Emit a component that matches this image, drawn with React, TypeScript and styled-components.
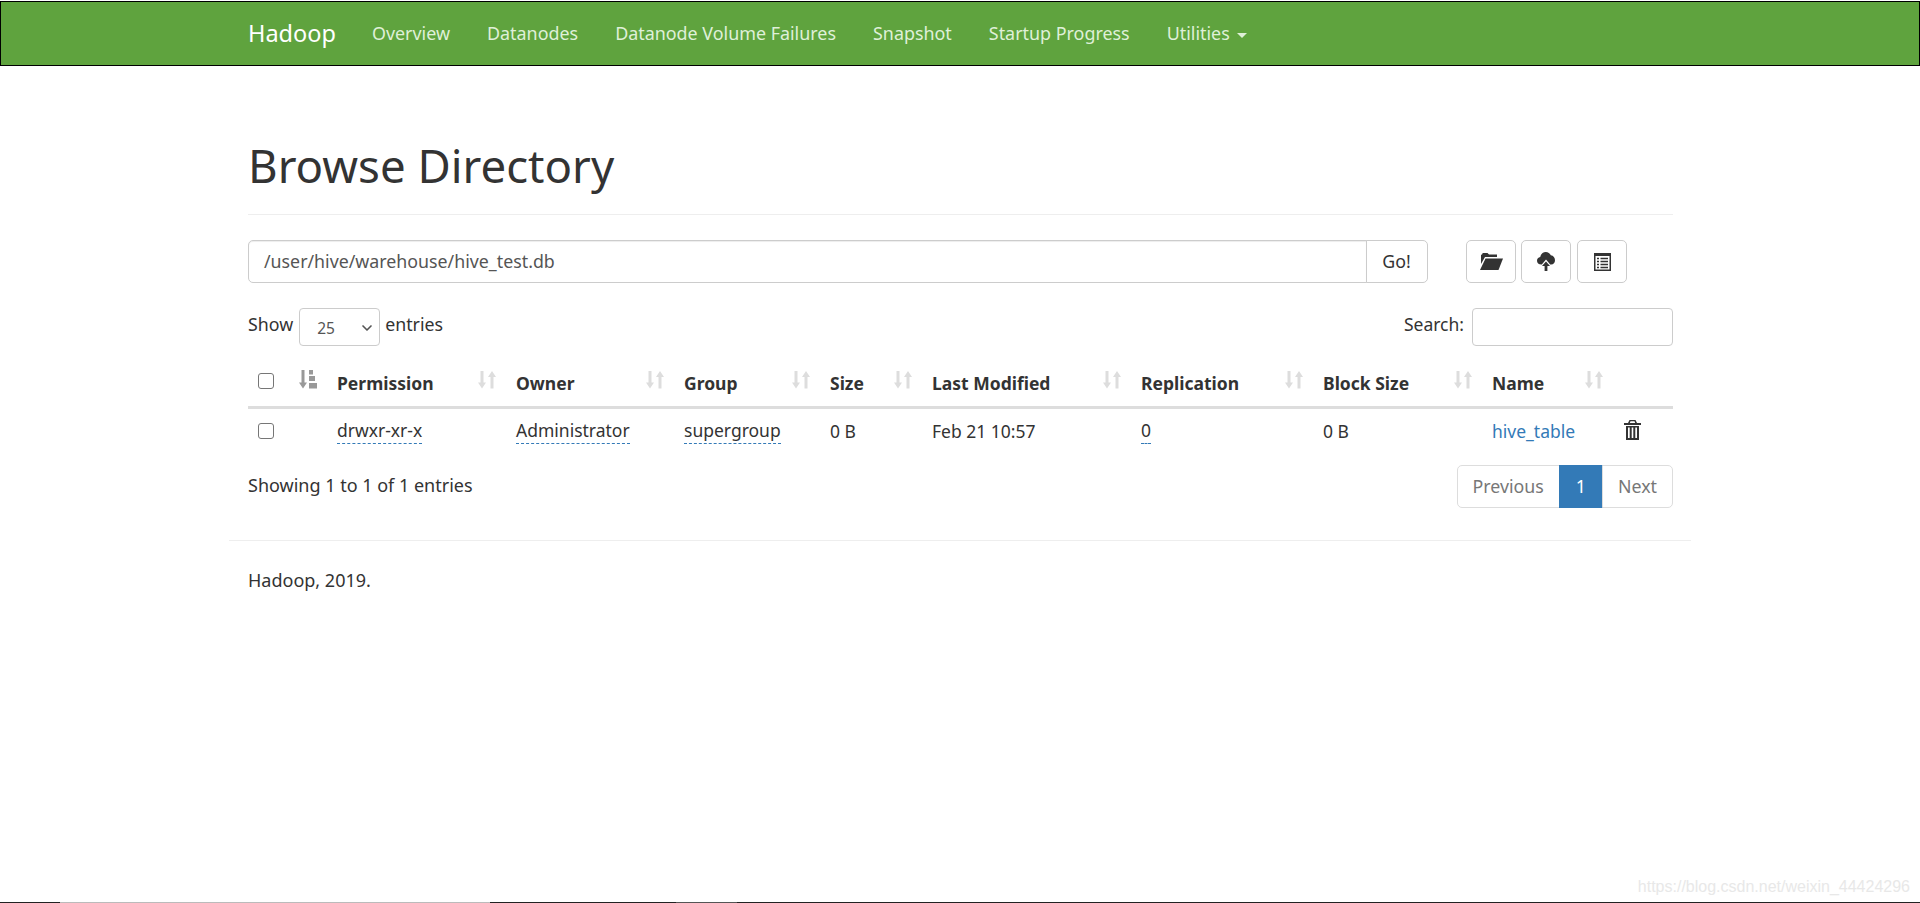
import React from "react";
import styled, { createGlobalStyle } from "styled-components";
import { ChevronDown } from "lucide-react";

const Global = createGlobalStyle`
  html, body { margin: 0; padding: 0; background: #fff; }
  body { font-family: "Noto Sans", "Liberation Sans", sans-serif; font-size: 17.8px; line-height: 25px; color: #333; height: 903px; overflow: hidden; position: relative; }
  * { box-sizing: border-box; }
`;

const Navbar = styled.nav`
  height: 65px; margin-top: 1px; background: #5fa33e; border: 1px solid #000;
  display: flex; justify-content: center;
`;
const NavInner = styled.div`
  width: 1462px; padding: 0 19px; display: flex; align-items: center; color: #dff0d8; font-size: 17.9px;
`;
const Brand = styled.a`
  font-size: 23.5px; color: #fff; margin-right: 36px;
`;
const NavLink = styled.a`
  color: #dff0d8; margin-right: 37px; display: flex; align-items: center;
`;
const Caret = styled.span`
  display: inline-block; width: 0; height: 0; margin-left: 7px; margin-top: 3px;
  border-top: 5px solid #dff0d8; border-left: 5px solid transparent; border-right: 5px solid transparent;
`;
const Container = styled.main`
  width: 1462px; margin: 0 auto; padding: 0 18px 0 19px;
`;
const PageHeader = styled.div`
  margin-top: 53px; height: 96px; border-bottom: 1px solid #eee; padding-top: 21px;
`;
const Title = styled.h1`
  margin: 0; font-size: 45.6px; font-weight: 400; line-height: 50px; color: #333;
`;
const Toolbar = styled.div`
  display: flex; margin-top: 25px; height: 43px;
`;
const PathGroup = styled.div`
  width: 1179.5px; display: flex;
`;
const PathInput = styled.div`
  flex: 1; border: 1px solid #ccc; border-radius: 5px 0 0 5px; padding: 0 15px;
  line-height: 41px; color: #555; box-shadow: inset 0 1px 1px rgba(0,0,0,.075);
`;
const GoButton = styled.div`
  width: 62px; margin-left: -1px; border: 1px solid #ccc; border-radius: 0 5px 5px 0;
  text-align: center; line-height: 41px; color: #333;
`;
const IconGroup = styled.div`
  display: flex; margin-left: 38.5px; gap: 5px;
`;
const IconButton = styled.div`
  width: 50px; height: 43px; border: 1px solid #ccc; border-radius: 5px;
  display: flex; align-items: center; justify-content: center; color: #333;
  &:last-child { margin-left: 1px; }
`;
const Controls = styled.div`
  display: flex; justify-content: space-between; margin-top: 25px; height: 38px; align-items: flex-start;
`;
const Label = styled.label`
  display: flex; align-items: center; gap: 6px; height: 38px; padding-bottom: 6px;
`;
const SearchLabel = styled(Label)`
  gap: 5px; font-size: 17.5px;
`;
const SelectBox = styled.div`
  width: 81px; height: 38px; margin: 6px -1px 0 0; border: 1px solid #ccc; border-radius: 4px; color: #555;
  font-size: 15.5px; display: flex; align-items: center; justify-content: space-between; padding: 2px 4px 0 17px;
`;
const SearchBox = styled.div`
  width: 201px; height: 38px; margin-left: 3px; margin-top: 6px; border: 1px solid #ccc; border-radius: 4px;
`;
const Table = styled.table`
  width: 1425px; margin-top: 7px; border-collapse: collapse; table-layout: fixed; font-size: 17.5px;
`;
const Col = styled.col<{ $w: number }>`
  width: ${(p) => p.$w}px;
`;
const Th = styled.th`
  position: relative; height: 54px; padding: 9px 12.5px 0; text-align: left; font-weight: 700;
  border-bottom: 3px solid #ddd; color: #333; white-space: nowrap;
`;
const SortMark = styled.span<{ $dark?: boolean }>`
  position: absolute; right: 8px; top: 17px; line-height: 0; color: ${(p) => (p.$dark ? "#999" : "#ddd")};
`;
const Td = styled.td`
  height: 47px; padding: 0 12.5px; white-space: nowrap; vertical-align: middle; color: #333;
`;
const Abbr = styled.span`
  border-bottom: 1px dashed #337ab7; padding-bottom: 1px; display: inline-block; line-height: 24px;
`;
const Check = styled.span<{ $head?: boolean }>`
  display: block; width: 16px; height: 16px; margin-left: -2.5px; margin-top: ${(p) => (p.$head ? "-6px" : "0")};
  border: 1px solid #767676; border-radius: 3px; background: #fff;
`;
const NameLink = styled.a`
  color: #337ab7;
`;
const TrashWrap = styled.span`
  display: block; line-height: 0; margin-top: -3px;
`;
const InfoRow = styled.div`
  display: flex; justify-content: space-between; align-items: flex-start; height: 78px;
`;
const Info = styled.div`
  padding-top: 19px; font-size: 18px;
`;
const Pager = styled.div`
  display: flex; height: 43px; margin-top: 11px;
`;
const PageItem = styled.div<{ $active?: boolean }>`
  border: 1px solid ${(p) => (p.$active ? "#337ab7" : "#ddd")};
  background: ${(p) => (p.$active ? "#337ab7" : "#fff")};
  color: ${(p) => (p.$active ? "#fff" : "#777")};
  line-height: 41px; padding: 0 ${(p) => (p.$active ? "16px" : "15px")}; margin-left: -1px;
  &:first-child { border-radius: 5px 0 0 5px; margin-left: 0; }
  &:last-child { border-radius: 0 5px 5px 0; }
`;
const FooterRule = styled.hr`
  width: 1462px; margin: 0 auto; border: 0; border-top: 1px solid #eee; margin-top: 8px;
`;
const Footer = styled.footer`
  width: 1462px; margin: 0 auto; padding: 27px 19px 0; font-size: 18px;
`;
const Watermark = styled.div`
  position: absolute; right: 10px; bottom: 7px; font-family: "Liberation Sans", sans-serif; font-size: 16px; line-height: 18px; color: #e8e8e8;
`;
const BottomEdge = styled.div`
  position: absolute; left: 0; right: 0; bottom: 0; height: 1px;
  background: linear-gradient(to right, #222 60px, #bbb 60px, #bbb 490px, #222 490px, #222 676px, #555 676px, #555 737px, #222 737px);
`;

const SortIcon = ({ dark }: { dark?: boolean }) => (
  <svg width="18" height="19" viewBox="0 0 18 19" fill="currentColor">
    {dark ? (
      <>
        <path d="M2.500 0h3v12.500H8L4 18.500 0 12.500h2.500z" />
        <path d="M10 0h4v4.500h-4zM10 6h6v5h-6zM10 13h8v5.500h-8z" />
      </>
    ) : (
      <>
        <path d="M2.500 1h3v11.500H8L4 18.500 0 12.500h2.500z" />
        <path d="M12.500 18.500h3V7H18L14 1l-4 6h2.500z" />
      </>
    )}
  </svg>
);

const FolderIcon = () => (
  <svg width="23" height="17" viewBox="0 0 23 17" fill="currentColor">
    <path d="M1 4V2l1.500-1V0h5l1.500 1.500h8V4H5L1 11z" />
    <path d="M5.500 5.500H23L18.500 17H0z" />
  </svg>
);
const UploadIcon = () => (
  <svg width="18" height="19" viewBox="0 0 18 19" fill="currentColor">
    <path d="M4.500 12.500C1.500 12.500 0 10.800 0 8.700c0-2 1.300-3.500 3.200-3.700C4 2 6 0 8.800 0c2.300 0 4.200 1.300 5 3.300C16.500 3.500 18 5.800 18 8.300c0 2.400-1.500 4.200-3.800 4.200h-1L9 7.500l-4.200 5z" />
    <path d="M9 9.500l4 4.500h-2.600v5H7.600v-5H5z" />
  </svg>
);
const ListIcon = () => (
  <svg width="17" height="18" viewBox="0 0 17 18" fill="none">
    <path fillRule="evenodd" fill="currentColor" d="M0 0h17v18H0zM1.500 3v13.500h14V3z" />
    <path stroke="currentColor" strokeWidth="1.500" d="M3 5.500h2M6.500 5.500H14M3 8.500h2M6.500 8.500H14M3 11.500h2M6.500 11.500H14M3 14.500h2M6.500 14.500H14" />
  </svg>
);
const TrashIcon = () => (
  <svg width="17" height="20" viewBox="0 0 17 20" fill="currentColor">
    <path fillRule="evenodd" d="M5.500 0h6L13 3h4v2H0V3h4zM6.500 1.300 5.800 3h5.400l-.7-1.700z" />
    <path fillRule="evenodd" d="M2 6h13v14H2zM4 7.500V18h1.700V7.500zM7.700 7.500V18h1.600V7.500zM11.300 7.500V18H13V7.500z" />
  </svg>
);

const columns = [
  { w: 76.5, label: "", check: true },
  { w: 179, label: "Permission" },
  { w: 168, label: "Owner" },
  { w: 146, label: "Group" },
  { w: 102, label: "Size" },
  { w: 209, label: "Last Modified" },
  { w: 182, label: "Replication" },
  { w: 169, label: "Block Size" },
  { w: 131.5, label: "Name" },
  { w: 62, label: "" },
];

export default function App() {
  return (
    <>
      <Global />
      <Navbar>
        <NavInner>
          <Brand>Hadoop</Brand>
          <NavLink>Overview</NavLink>
          <NavLink>Datanodes</NavLink>
          <NavLink>Datanode Volume Failures</NavLink>
          <NavLink>Snapshot</NavLink>
          <NavLink>Startup Progress</NavLink>
          <NavLink>
            Utilities
            <Caret />
          </NavLink>
        </NavInner>
      </Navbar>
      <Container>
        <PageHeader>
          <Title>Browse Directory</Title>
        </PageHeader>
        <Toolbar>
          <PathGroup>
            <PathInput>/user/hive/warehouse/hive_test.db</PathInput>
            <GoButton>Go!</GoButton>
          </PathGroup>
          <IconGroup>
            <IconButton><FolderIcon /></IconButton>
            <IconButton><UploadIcon /></IconButton>
            <IconButton><ListIcon /></IconButton>
          </IconGroup>
        </Toolbar>
        <Controls>
          <Label>
            Show
            <SelectBox>
              25
              <ChevronDown size={16} strokeWidth={2.5} />
            </SelectBox>
            entries
          </Label>
          <SearchLabel>
            Search:
            <SearchBox />
          </SearchLabel>
        </Controls>
        <Table>
          <colgroup>
            {columns.map((c, i) => (
              <Col key={i} $w={c.w} />
            ))}
          </colgroup>
          <thead>
            <tr>
              {columns.map((c, i) => (
                <Th key={i}>
                  {c.check ? <Check $head /> : c.label}
                  {i < 9 && (
                    <SortMark $dark={i === 0}>
                      <SortIcon dark={i === 0} />
                    </SortMark>
                  )}
                </Th>
              ))}
            </tr>
          </thead>
          <tbody>
            <tr>
              <Td><Check /></Td>
              <Td><Abbr>drwxr-xr-x</Abbr></Td>
              <Td><Abbr>Administrator</Abbr></Td>
              <Td><Abbr>supergroup</Abbr></Td>
              <Td>0 B</Td>
              <Td>Feb 21 10:57</Td>
              <Td><Abbr>0</Abbr></Td>
              <Td>0 B</Td>
              <Td><NameLink>hive_table</NameLink></Td>
              <Td><TrashWrap><TrashIcon /></TrashWrap></Td>
            </tr>
          </tbody>
        </Table>
        <InfoRow>
          <Info>Showing 1 to 1 of 1 entries</Info>
          <Pager>
            <PageItem>Previous</PageItem>
            <PageItem $active>1</PageItem>
            <PageItem>Next</PageItem>
          </Pager>
        </InfoRow>
      </Container>
      <FooterRule />
      <Footer>Hadoop, 2019.</Footer>
      <Watermark>https://blog.csdn.net/weixin_44424296</Watermark>
      <BottomEdge />
    </>
  );
}
